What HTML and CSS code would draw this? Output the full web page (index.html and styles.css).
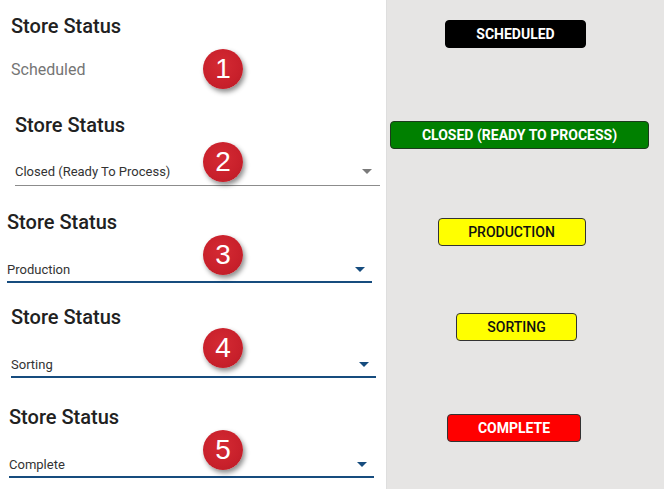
FILE: index.html
```html
<!DOCTYPE html>
<html lang="en">
<head>
    <meta charset="UTF-8">
    <meta name="viewport" content="width=device-width, initial-scale=1.0">
    <title>Store Status</title>
    <link rel="stylesheet" href="styles.css">
</head>
<body>
    <div class="page">
        <section class="row row-1">
            <div class="field-col">
                <h2 class="label">Store Status</h2>
                <p class="readonly">Scheduled</p>
            </div>
            <div class="pill-col">
                <span class="pill pill-scheduled">Scheduled</span>
            </div>
            <span class="step">1</span>
        </section>

        <section class="row row-2">
            <div class="field-col">
                <h2 class="label">Store Status</h2>
                <div class="select select-idle">
                    <span>Closed (Ready To Process)</span>
                    <span class="caret"></span>
                </div>
            </div>
            <div class="pill-col">
                <span class="pill pill-closed">Closed (Ready To Process)</span>
            </div>
            <span class="step">2</span>
        </section>

        <section class="row row-3">
            <div class="field-col">
                <h2 class="label">Store Status</h2>
                <div class="select">
                    <span>Production</span>
                    <span class="caret"></span>
                </div>
            </div>
            <div class="pill-col">
                <span class="pill pill-production">Production</span>
            </div>
            <span class="step">3</span>
        </section>

        <section class="row row-4">
            <div class="field-col">
                <h2 class="label">Store Status</h2>
                <div class="select">
                    <span>Sorting</span>
                    <span class="caret"></span>
                </div>
            </div>
            <div class="pill-col">
                <span class="pill pill-sorting">Sorting</span>
            </div>
            <span class="step">4</span>
        </section>

        <section class="row row-5">
            <div class="field-col">
                <h2 class="label">Store Status</h2>
                <div class="select">
                    <span>Complete</span>
                    <span class="caret"></span>
                </div>
            </div>
            <div class="pill-col">
                <span class="pill pill-complete">Complete</span>
            </div>
            <span class="step">5</span>
        </section>
    </div>
</body>
</html>
```

FILE: styles.css
```css
body {
    margin: 0;
    font-family: Roboto, "Liberation Sans", sans-serif;
    color: #212121;
    background-color: #ffffff;
}
.page {
    width: 664px;
    height: 489px;
    overflow: hidden;
}
.row {
    position: relative;
    display: grid;
    grid-template-columns: 386px 1fr;
}
.row-1 { height: 99px; }
.row-2 { height: 97px; }
.row-3 { height: 95px; }
.row-4 { height: 100px; }
.row-5 { height: 98px; }

/* left column: form fields */
.field-col {
    padding-top: 14px;
    background-color: #ffffff;
}
.row-1 .field-col { padding-left: 11px; }
.row-2 .field-col { padding-left: 15px; }
.row-3 .field-col { padding-left: 7px; }
.row-4 .field-col { padding-left: 11px; }
.row-5 .field-col { padding-left: 9px; }

.label {
    margin: 0;
    font-size: 20px;
    line-height: 24px;
    font-weight: 500;
    color: #212121;
}
.readonly {
    margin: 22px 0 0;
    font-size: 16px;
    line-height: 20px;
    color: #757575;
}
.select {
    width: 358px;
    margin-top: 28px;
    padding: 0 7px 3px 0;
    display: flex;
    justify-content: space-between;
    align-items: center;
    font-size: 13px;
    line-height: 16px;
    color: #333333;
    border-bottom: 2px solid #164c7e;
}
.caret {
    width: 0;
    height: 0;
    margin-top: -2px;
    border-left: 5px solid transparent;
    border-right: 5px solid transparent;
    border-top: 5px solid #164c7e;
}
.select-idle {
    margin-top: 27px;
    padding-bottom: 5px;
    padding-right: 8px;
    width: 357px;
    border-bottom: 1px solid #8c8c8c;
}
.select-idle .caret {
    border-top-color: #7a7a7a;
}

/* right column: status pills */
.pill-col {
    display: flex;
    justify-content: center;
    align-items: flex-start;
    padding: 22px 18px 0 0;
    background-color: #e6e5e4;
    border-left: 1px solid #dedede;
}
.row-1 .pill-col { padding-top: 20px; }
.row-2 .pill-col {
    justify-content: flex-start;
    padding-right: 0;
}
.row-5 .pill-col { padding-top: 23px; }

.pill {
    box-sizing: border-box;
    height: 28px;
    line-height: 26px;
    text-align: center;
    text-transform: uppercase;
    font-size: 14px;
    border: 1px solid #333333;
    border-radius: 4px;
}
.pill-scheduled {
    width: 141px;
    margin-right: 2px;
    background-color: #000000;
    border-color: #000000;
    color: #ffffff;
    font-weight: 700;
}
.pill-closed {
    width: 259px;
    margin-left: 3px;
    background-color: #008000;
    border-color: #1c3a1c;
    color: #ffffff;
    font-weight: 700;
}
.pill-production {
    width: 148px;
    margin-right: 10px;
    background-color: #ffff00;
    color: #111111;
    font-weight: 500;
}
.pill-sorting {
    width: 121px;
    background-color: #ffff00;
    color: #111111;
    font-weight: 500;
}
.pill-complete {
    width: 134px;
    margin-right: 5px;
    background-color: #ff0000;
    color: #ffffff;
    font-weight: 700;
}

/* numbered callouts over the form */
.step {
    position: absolute;
    left: 203px;
    width: 40px;
    height: 40px;
    border-radius: 50%;
    background: radial-gradient(circle at 45% 40%, #d42a33 0%, #c8202b 60%, #b51c26 100%);
    box-shadow: 2px 3px 5px rgba(0, 0, 0, 0.45);
    color: #ffffff;
    font-family: "Liberation Sans", Arial, sans-serif;
    font-size: 28px;
    line-height: 40px;
    text-align: center;
}
.row-1 .step { top: 49px; }
.row-2 .step { top: 43px; }
.row-3 .step { top: 39px; }
.row-4 .step { top: 37px; }
.row-5 .step { top: 39px; }
```
